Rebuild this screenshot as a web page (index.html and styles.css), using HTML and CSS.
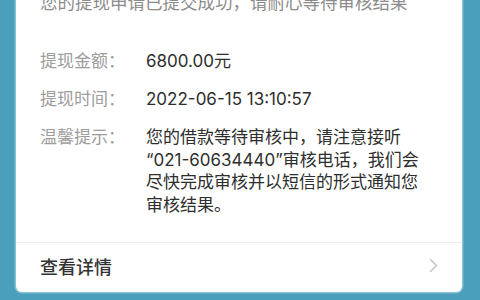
FILE: index.html
```html
<!DOCTYPE html>
<html lang="zh-CN">
<head>
<meta charset="utf-8">
<link rel="stylesheet" href="styles.css">
</head>
<body>
<div class="page">
  <div class="card">
    <div class="body">
      <p class="notice">您的提现申请已提交成功，请耐心等待审核结果</p>
      <div class="rows">
        <div class="row">
          <span class="label">提现金额：</span>
          <span class="value">6800.00元</span>
        </div>
        <div class="row">
          <span class="label">提现时间：</span>
          <span class="value">2022-06-15 13:10:57</span>
        </div>
        <div class="row">
          <span class="label">温馨提示：</span>
          <span class="value para">您的借款等待审核中，请注意接听“021-60634440”审核电话，我们会尽快完成审核并以短信的形式通知您审核结果。</span>
        </div>
      </div>
    </div>
    <div class="footer">
      <span class="link">查看详情</span>
      <svg class="chev" width="9" height="15" viewBox="0 0 9 15"><polyline points="1.5,1.5 7.5,7.5 1.5,13.5" fill="none" stroke="#c6c6c6" stroke-width="1.6" stroke-linecap="round" stroke-linejoin="round"/></svg>
    </div>
  </div>
</div>
</body>
</html>
```
FILE: styles.css
```css
html, body {
  margin: 0;
  padding: 0;
}
body {
  width: 480px;
  height: 300px;
  overflow: hidden;
  background: #4a9fbd;
  font-family: Inter, "Noto Sans CJK SC", sans-serif;
}
.page {
  padding: 0 18px 0 16px;
  margin-top: -20px;
}
.card {
  background: #fff;
  border-radius: 0 0 6px 6px;
  box-shadow: 0 0 0 1.5px rgba(255, 255, 255, 0.35);
  height: 312px;
  display: flex;
  flex-direction: column;
}
.body {
  padding: 12px 24px 0 24px;
  flex: 1;
}
.notice {
  margin: 0;
  font-size: 17.5px;
  line-height: 22px;
  color: #8c8c8c;
  white-space: nowrap;
}
.rows {
  margin-top: 36px;
  display: flex;
  flex-direction: column;
  gap: 16px;
}
.row {
  display: flex;
  font-size: 17px;
  line-height: 22px;
}
.label {
  width: 106px;
  flex: none;
  color: #9d9d9d;
}
.value {
  color: #2e2e2e;
}
.para {
  width: 284px;
  line-height: 22.5px;
}
.footer {
  height: 50px;
  box-sizing: border-box;
  border-top: 1px solid #ededed;
  display: flex;
  align-items: center;
  justify-content: space-between;
  padding: 0 24px 4px 24px;
}
.link {
  font-size: 18px;
  color: #333;
  font-weight: 500;
}
.chev {
  display: block;
}
```
